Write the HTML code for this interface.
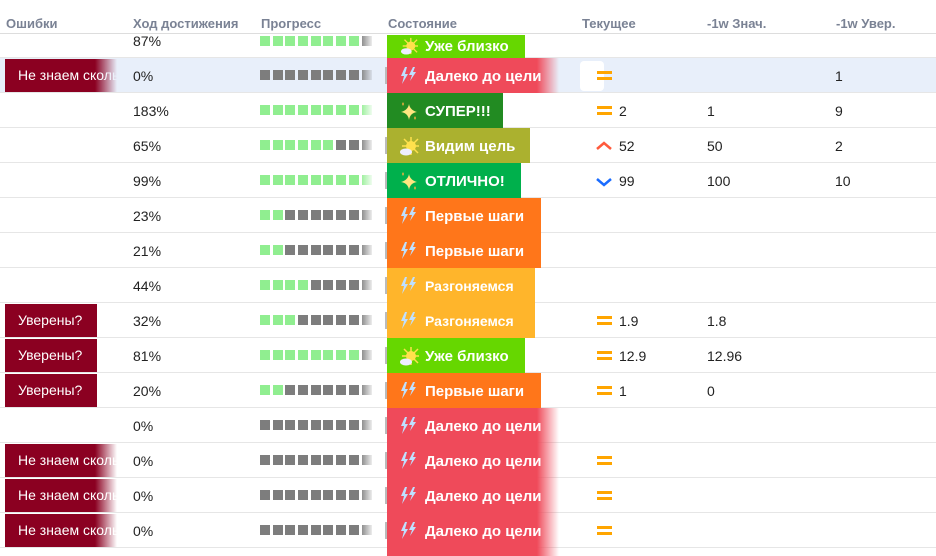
<!DOCTYPE html>
<html style="width:936px;height:556px;overflow:hidden"><head><meta charset="utf-8"><style>
*{margin:0;padding:0;box-sizing:border-box}
body{width:936px;height:556px;overflow:hidden;background:#fff;font-family:"Liberation Sans",sans-serif;font-size:14px;color:#222;position:relative}
.hdr{position:absolute;left:0;top:0;width:936px;height:34px;background:#fff;border-bottom:1px solid #ddd;z-index:5}
.hdr span{position:absolute;top:16px;font-size:13px;font-weight:bold;color:#7a8294}
.row{position:absolute;left:0;width:936px;height:35px;border-bottom:1px solid #e6e6e6}
.row.hl{background:#e8effa}
.c{position:absolute;top:10px;line-height:16px}
.err{position:absolute;left:5px;top:1px;height:33px;background:#8b0021;color:#fff;line-height:33px;padding-left:13px;white-space:nowrap;overflow:hidden}
.err.u{width:92px}
.err.n{width:112px;-webkit-mask-image:linear-gradient(to right,#000 90px,transparent 112px);mask-image:linear-gradient(to right,#000 90px,transparent 112px)}
.bars{position:absolute;left:260px;top:12px;width:116px;height:10px;display:flex;gap:2.7px;-webkit-mask-image:linear-gradient(to right,#000 100px,transparent 114px);mask-image:linear-gradient(to right,#000 100px,transparent 114px)}
.bars i{flex:0 0 10px;width:10px;height:10px;background:#7d7d7d}
.bars i.g{background:#90ee90}
.tick{position:absolute;left:385px;top:9px;width:2px;height:17px;background:#bbb}
.st{position:absolute;left:387px;top:0;height:35px;color:#fff;font-weight:bold;font-size:15px;line-height:37px;padding-left:38px;white-space:nowrap}
.st svg{position:absolute;left:12px;top:8px}
.fade{-webkit-mask-image:linear-gradient(to right,#000 150px,transparent 172px);mask-image:linear-gradient(to right,#000 150px,transparent 172px)}
.eq{position:absolute;left:597px;top:13px;width:15px;height:9px;border-top:3px solid #ffa500;border-bottom:3px solid #ffa500}
</style></head><body>
<div class="hdr"><span style="left:6px">Ошибки</span><span style="left:133px">Ход достижения</span><span style="left:261px">Прогресс</span><span style="left:388px">Состояние</span><span style="left:582px">Текущее</span><span style="left:707px">-1w Знач.</span><span style="left:836px">-1w Увер.</span></div>

<svg width="0" height="0" style="position:absolute"><defs>
<symbol id="bolt" viewBox="0 0 20 20"><path d="M6 1 L2 10 H5 L3 18 L9 8 H6 L8 1Z M14 1 L10 9 H13 L11 15 L17 6 H14 L16 1Z" fill="#bfe0ff"/></symbol>
<symbol id="sun" viewBox="0 0 20 20"><g stroke="#ffe14d" stroke-width="1.5"><line x1="12" y1="1" x2="12" y2="19"/><line x1="3" y1="10" x2="20" y2="10"/><line x1="5" y1="3" x2="19" y2="17"/><line x1="19" y1="3" x2="5" y2="17"/></g><circle cx="12" cy="10" r="5" fill="#ffe14d"/><ellipse cx="7" cy="16" rx="6" ry="3.5" fill="#eef"/></symbol>
<symbol id="spark" viewBox="0 0 20 20"><path d="M10 3 Q11 9 18 11 Q11 12 10 19 Q9 12 2 11 Q9 9 10 3Z" fill="#ffe680"/><path d="M4 1 L5 3 L4 5 L3 3Z M16 15 L17 17 L16 19 L15 17Z" fill="#f0b040"/></symbol>
</defs></svg>

<div class="row" style="top:23px"><span class="c" style="left:133px;top:12px;line-height:13px">87%</span><div class="bars" style="top:13px"><i class="g"></i><i class="g"></i><i class="g"></i><i class="g"></i><i class="g"></i><i class="g"></i><i class="g"></i><i class="g"></i><i></i></div><div class="st" style="width:138px;background:#66d700;top:12px;height:23px;line-height:23px"><svg width="20" height="18" style="top:2px"><use href="#sun"/></svg>Уже близко</div></div>

<div class="row hl" style="top:58px"><div class="err n">Не знаем сколько</div><span class="c" style="left:133px">0%</span><div class="bars"><i></i><i></i><i></i><i></i><i></i><i></i><i></i><i></i><i></i></div><div class="tick"></div><div class="st fade" style="width:172px;background:#ef4a5a"><svg width="20" height="20"><use href="#bolt"/></svg>Далеко до цели</div><div style="position:absolute;left:580px;top:3px;width:24px;height:30px;background:#fff;border-radius:4px"></div><div class="eq"></div><span class="c" style="left:835px">1</span></div>

<div class="row" style="top:93px"><span class="c" style="left:133px">183%</span><div class="bars"><i class="g"></i><i class="g"></i><i class="g"></i><i class="g"></i><i class="g"></i><i class="g"></i><i class="g"></i><i class="g"></i><i class="g"></i></div><div class="st" style="width:116px;background:#228b22"><svg width="20" height="20"><use href="#spark"/></svg>СУПЕР!!!</div><div class="eq"></div><span class="c" style="left:619px">2</span><span class="c" style="left:707px">1</span><span class="c" style="left:835px">9</span></div>

<div class="row" style="top:128px"><span class="c" style="left:133px">65%</span><div class="bars"><i class="g"></i><i class="g"></i><i class="g"></i><i class="g"></i><i class="g"></i><i class="g"></i><i></i><i></i><i></i></div><div class="tick"></div><div class="st" style="width:143px;background:#abb12f"><svg width="20" height="20"><use href="#sun"/></svg>Видим цель</div><svg style="position:absolute;left:596px;top:13px" width="16" height="10"><path d="M1 8 L8 2 L15 8" stroke="#ff5a3c" stroke-width="2.5" fill="none"/></svg><span class="c" style="left:619px">52</span><span class="c" style="left:707px">50</span><span class="c" style="left:835px">2</span></div>

<div class="row" style="top:163px"><span class="c" style="left:133px">99%</span><div class="bars"><i class="g"></i><i class="g"></i><i class="g"></i><i class="g"></i><i class="g"></i><i class="g"></i><i class="g"></i><i class="g"></i><i class="g"></i></div><div class="tick"></div><div class="st" style="width:134px;background:#00b04c"><svg width="20" height="20"><use href="#spark"/></svg>ОТЛИЧНО!</div><svg style="position:absolute;left:596px;top:14px" width="16" height="10"><path d="M1 2 L8 8 L15 2" stroke="#1a6cff" stroke-width="2.5" fill="none"/></svg><span class="c" style="left:619px">99</span><span class="c" style="left:707px">100</span><span class="c" style="left:835px">10</span></div>

<div class="row" style="top:198px"><span class="c" style="left:133px">23%</span><div class="bars"><i class="g"></i><i class="g"></i><i></i><i></i><i></i><i></i><i></i><i></i><i></i></div><div class="tick"></div><div class="st" style="width:154px;background:#ff761a"><svg width="20" height="20"><use href="#bolt"/></svg>Первые шаги</div></div>

<div class="row" style="top:233px"><span class="c" style="left:133px">21%</span><div class="bars"><i class="g"></i><i class="g"></i><i></i><i></i><i></i><i></i><i></i><i></i><i></i></div><div class="tick"></div><div class="st" style="width:154px;background:#ff761a"><svg width="20" height="20"><use href="#bolt"/></svg>Первые шаги</div></div>

<div class="row" style="top:268px"><span class="c" style="left:133px">44%</span><div class="bars"><i class="g"></i><i class="g"></i><i class="g"></i><i class="g"></i><i></i><i></i><i></i><i></i><i></i></div><div class="tick"></div><div class="st" style="width:148px;background:#ffb52b;font-size:14px"><svg width="20" height="20"><use href="#bolt"/></svg>Разгоняемся</div></div>

<div class="row" style="top:303px"><div class="err u">Уверены?</div><span class="c" style="left:133px">32%</span><div class="bars"><i class="g"></i><i class="g"></i><i class="g"></i><i></i><i></i><i></i><i></i><i></i><i></i></div><div class="tick"></div><div class="st" style="width:148px;background:#ffb52b;font-size:14px"><svg width="20" height="20"><use href="#bolt"/></svg>Разгоняемся</div><div class="eq"></div><span class="c" style="left:619px">1.9</span><span class="c" style="left:707px">1.8</span></div>

<div class="row" style="top:338px"><div class="err u">Уверены?</div><span class="c" style="left:133px">81%</span><div class="bars"><i class="g"></i><i class="g"></i><i class="g"></i><i class="g"></i><i class="g"></i><i class="g"></i><i class="g"></i><i class="g"></i><i></i></div><div class="tick"></div><div class="st" style="width:138px;background:#66d700"><svg width="20" height="20"><use href="#sun"/></svg>Уже близко</div><div class="eq"></div><span class="c" style="left:619px">12.9</span><span class="c" style="left:707px">12.96</span></div>

<div class="row" style="top:373px"><div class="err u">Уверены?</div><span class="c" style="left:133px">20%</span><div class="bars"><i class="g"></i><i class="g"></i><i></i><i></i><i></i><i></i><i></i><i></i><i></i></div><div class="tick"></div><div class="st" style="width:154px;background:#ff761a"><svg width="20" height="20"><use href="#bolt"/></svg>Первые шаги</div><div class="eq"></div><span class="c" style="left:619px">1</span><span class="c" style="left:707px">0</span></div>

<div class="row" style="top:408px"><span class="c" style="left:133px">0%</span><div class="bars"><i></i><i></i><i></i><i></i><i></i><i></i><i></i><i></i><i></i></div><div class="tick"></div><div class="st fade" style="width:172px;background:#ef4a5a"><svg width="20" height="20"><use href="#bolt"/></svg>Далеко до цели</div></div>

<div class="row" style="top:443px"><div class="err n">Не знаем сколько</div><span class="c" style="left:133px">0%</span><div class="bars"><i></i><i></i><i></i><i></i><i></i><i></i><i></i><i></i><i></i></div><div class="tick"></div><div class="st fade" style="width:172px;background:#ef4a5a"><svg width="20" height="20"><use href="#bolt"/></svg>Далеко до цели</div><div class="eq"></div></div>

<div class="row" style="top:478px"><div class="err n">Не знаем сколько</div><span class="c" style="left:133px">0%</span><div class="bars"><i></i><i></i><i></i><i></i><i></i><i></i><i></i><i></i><i></i></div><div class="tick"></div><div class="st fade" style="width:172px;background:#ef4a5a"><svg width="20" height="20"><use href="#bolt"/></svg>Далеко до цели</div><div class="eq"></div></div>

<div class="row" style="top:513px"><div class="err n">Не знаем сколько</div><span class="c" style="left:133px">0%</span><div class="bars"><i></i><i></i><i></i><i></i><i></i><i></i><i></i><i></i><i></i></div><div class="tick"></div><div class="st fade" style="width:172px;background:#ef4a5a"><svg width="20" height="20"><use href="#bolt"/></svg>Далеко до цели</div><div class="eq"></div></div>

<div class="row" style="top:548px;height:8px;border:none"><div class="st fade" style="width:172px;height:8px;background:#ef4a5a"></div></div>
</body></html>
